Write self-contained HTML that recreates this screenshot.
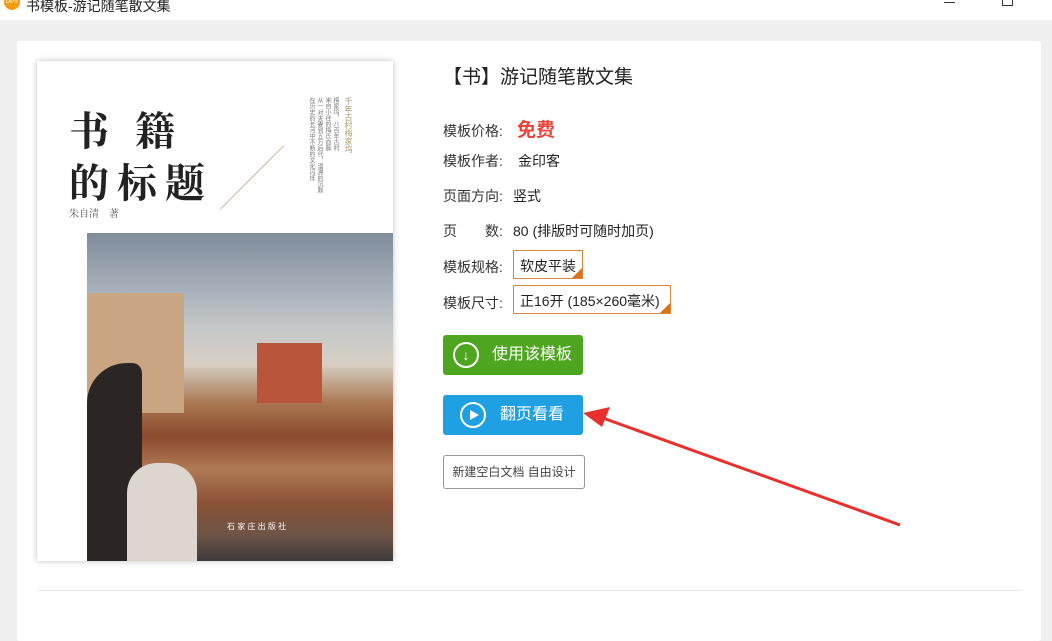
<!DOCTYPE html>
<html><head><meta charset="utf-8"><style>
*{margin:0;padding:0;box-sizing:border-box}
body{width:1052px;height:615px;background:#f0f0f0;font-family:"Liberation Sans","Noto Sans CJK SC",sans-serif;position:relative;overflow:hidden;color:#222}
.tb{position:absolute;left:0;top:0;width:1052px;height:20px;background:#fff}
.card{position:absolute;left:17px;top:41px;width:1024px;height:600px;background:#fff;border-radius:3px}
.a{position:absolute}
.lbl{position:absolute;left:443px;font-size:14px;color:#333}
</style></head><body>
<div class="tb">
<div class="a" style="left:4px;top:-6px;width:16px;height:16px;border-radius:50%;background:#f39c12;color:#fff;font-size:6px;line-height:16px;text-align:center">DPS</div>
<div class="a" style="left:26px;top:-4px;font-size:14px;color:#222">书模板-游记随笔散文集</div>
<div class="a" style="left:944px;top:2px;width:11px;height:1px;background:#333"></div>
<div class="a" style="left:1002px;top:-4px;width:11px;height:10px;border:1px solid #333"></div>
</div>
<div class="card"></div>
<div class="a" style="left:37px;top:590px;width:984px;height:1px;background:#e6e6e6"></div>
<div class="a" style="left:37px;top:61px;width:356px;height:500px;background:#fff;box-shadow:0 0 6px rgba(0,0,0,.25)">
<div class="a" style="left:32px;top:42px;font-size:40px;font-weight:bold;font-family:'Noto Serif CJK SC',serif;letter-spacing:8px;line-height:52px">书 籍<br>的标题</div>
<div class="a" style="left:32px;top:144px;font-size:10px;color:#555;font-family:'Noto Serif CJK SC',serif">朱自清　著</div>
<div class="a" style="left:170px;top:116px;width:90px;height:1px;background:#c8b8a0;transform:rotate(-45deg)"></div>
<div class="a" style="left:266px;top:36px;width:36px;height:104px;font-size:6px;color:#777;writing-mode:vertical-rl;line-height:8px;overflow:hidden">梅家坞，八百年古村<br>来自小径的梅氏血脉<br>从一对夫妻到五万后代，漫溯的沉默<br>在历史的长河中不断的文化闪烁</div>
<div class="a" style="left:306px;top:36px;font-size:8px;color:#b09a70;writing-mode:vertical-rl">千年古村梅家坞</div>
<div class="a" style="left:50px;top:172px;width:306px;height:328px;background:linear-gradient(180deg,#7f8c9a 0%,#a9b2bc 18%,#c7c9c9 30%,#d7cfc3 40%,#a9764f 52%,#8b4a2f 62%,#b07a55 72%,#8c5236 82%,#6e5446 92%,#3c3a3a 100%)">
<div class="a" style="left:0;top:60px;width:97px;height:120px;background:#c9a582"></div>
<div class="a" style="left:170px;top:110px;width:65px;height:60px;background:#b8553a"></div>
<div class="a" style="left:0;top:130px;width:55px;height:198px;background:#2b2624;border-radius:40px 10px 0 0"></div>
<div class="a" style="left:40px;top:230px;width:70px;height:98px;background:#ddd6cf;border-radius:30px 30px 0 0"></div>
<div class="a" style="left:140px;top:288px;font-size:8px;color:#fff">石 家 庄 出 版 社</div>
</div>
</div>
<div class="a" style="left:443px;top:62px;font-size:19px;color:#222">【书】游记随笔散文集</div>
<div class="lbl" style="top:121px">模板价格:</div>
<div class="a" style="left:517px;top:115px;font-size:19px;font-weight:bold;color:#e8453c">免费</div>
<div class="lbl" style="top:151px">模板作者:</div><div class="a" style="left:518px;top:151px;font-size:14px">金印客</div>
<div class="lbl" style="top:186px">页面方向:</div><div class="a" style="left:513px;top:186px;font-size:14px">竖式</div>
<div class="lbl" style="top:221px">页　　数:</div><div class="a" style="left:513px;top:221px;font-size:14px">80 (排版时可随时加页)</div>
<div class="lbl" style="top:257px">模板规格:</div>
<div class="a" style="left:513px;top:250px;width:70px;height:29px;border:1px solid #d9873a;font-size:14px;padding:5px 0 0 6px">软皮平装<div class="a" style="right:0;bottom:0;width:0;height:0;border-left:10px solid transparent;border-bottom:10px solid #d9731a"></div></div>
<div class="lbl" style="top:293px">模板尺寸:</div>
<div class="a" style="left:513px;top:285px;width:158px;height:29px;border:1px solid #d9873a;font-size:14px;padding:5px 0 0 6px;white-space:nowrap;overflow:hidden">正16开 (185×260毫米)<div class="a" style="right:0;bottom:0;width:0;height:0;border-left:10px solid transparent;border-bottom:10px solid #d9731a"></div></div>
<div class="a" style="left:443px;top:335px;width:140px;height:40px;background:#4ea51f;border-radius:3px;color:#fff;font-size:16px">
<div class="a" style="left:10px;top:7px;width:26px;height:26px;border:2px solid #fff;border-radius:50%;text-align:center;font-size:14px;line-height:22px">↓</div>
<div class="a" style="left:49px;top:0;line-height:40px">使用该模板</div></div>
<div class="a" style="left:443px;top:395px;width:140px;height:40px;background:#1fa0e3;border-radius:3px;color:#fff;font-size:16px">
<div class="a" style="left:17px;top:7px;width:26px;height:26px;border:2px solid #fff;border-radius:50%"><div class="a" style="left:8px;top:6px;width:0;height:0;border-left:9px solid #fff;border-top:5px solid transparent;border-bottom:5px solid transparent"></div></div>
<div class="a" style="left:57px;top:0;line-height:40px">翻页看看</div></div>
<div class="a" style="left:443px;top:455px;width:142px;height:34px;border:1px solid #999;border-radius:3px;font-size:12px;color:#444;text-align:center;line-height:32px">新建空白文档 自由设计</div>
<svg class="a" style="left:580px;top:405px" width="330" height="125"><line x1="320" y1="120" x2="20" y2="12" stroke="#e8312c" stroke-width="3"/><polygon points="3,8 30,2 22,22" fill="#e8312c"/></svg>
</body></html>
